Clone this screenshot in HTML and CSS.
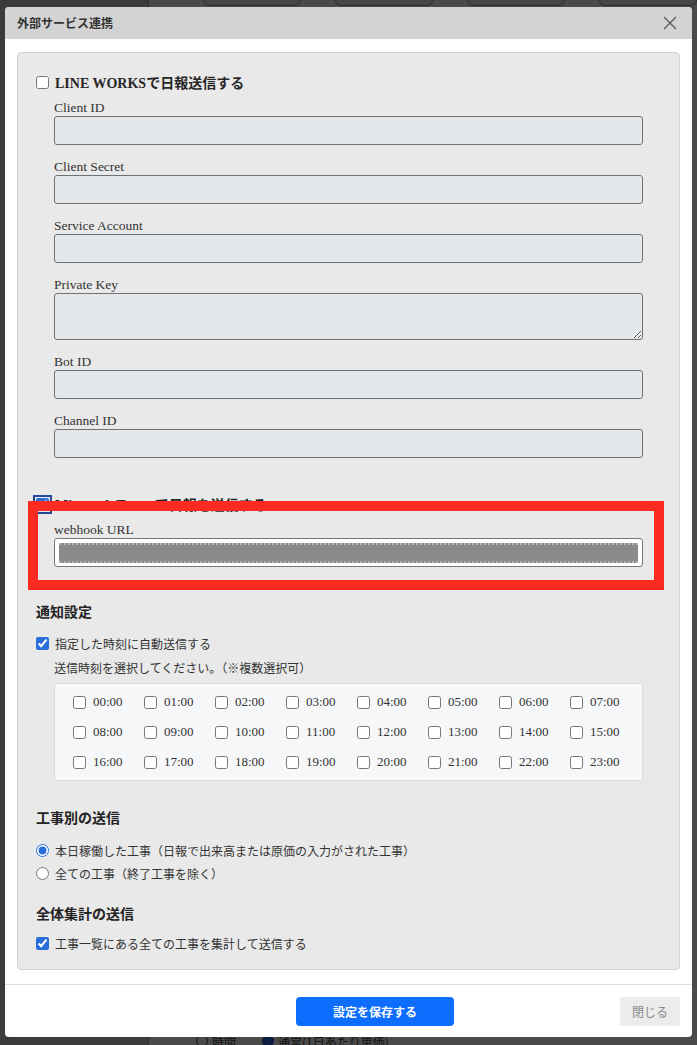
FILE: index.html
```html
<!DOCTYPE html>
<html lang="ja">
<head>
    <meta charset="UTF-8">
    <meta name="viewport" content="width=device-width, initial-scale=1.0">
    <title>外部サービス連携</title>
    <link rel="stylesheet" href="styles.css">
</head>
<body>
    <!-- ページ本体（モーダルの背後） -->
    <div class="page">
        <aside class="side"></aside>
        <main class="main">
            <div class="toolbar">
                <span class="tool"></span>
                <span class="tool"></span>
                <span class="tool"></span>
                <span class="tool"></span>
            </div>
            <div class="under-row">
                <span class="dot"></span><span>時間</span>
                <span class="dot on"></span><span>通常(1日あたり単価)</span>
            </div>
        </main>
    </div>

    <!-- 外部サービス連携モーダル -->
    <div class="modal">
        <div class="modal-head">
            <h2 class="modal-title">外部サービス連携</h2>
            <button class="close" type="button">
                <svg width="14" height="14" viewBox="0 0 14 14"><path d="M1 1L13 13M13 1L1 13" stroke="#5a5a5a" stroke-width="1.3" fill="none"/></svg>
            </button>
        </div>

        <div class="modal-body">
            <div class="panel">
                <label class="check-title"><input type="checkbox"> LINE WORKSで日報送信する</label>
                <div class="fields">
                    <div class="field">
                        <label for="client-id">Client ID</label>
                        <input class="text" type="text" id="client-id">
                    </div>
                    <div class="field">
                        <label for="client-secret">Client Secret</label>
                        <input class="text" type="text" id="client-secret">
                    </div>
                    <div class="field">
                        <label for="service-account">Service Account</label>
                        <input class="text" type="text" id="service-account">
                    </div>
                    <div class="field">
                        <label for="private-key">Private Key</label>
                        <textarea class="text area" id="private-key"></textarea>
                    </div>
                    <div class="field">
                        <label for="bot-id">Bot ID</label>
                        <input class="text" type="text" id="bot-id">
                    </div>
                    <div class="field">
                        <label for="channel-id">Channel ID</label>
                        <input class="text" type="text" id="channel-id">
                    </div>
                </div>

                <div class="teams">
                    <label class="check-title"><input type="checkbox" class="focus" checked> Microsoft Teamsで日報を送信する</label>
                    <div class="fields">
                        <div class="field">
                            <label>webhook URL</label>
                            <div class="text url"><span class="redacted"></span></div>
                        </div>
                    </div>
                    <div class="mark"></div>
                </div>

                <!-- 通知設定 -->
                <h3 class="sec-title first">通知設定</h3>
                <label class="opt check-top"><input type="checkbox" checked> 指定した時刻に自動送信する</label>
                <p class="hint">送信時刻を選択してください。（※複数選択可）</p>
                <div class="times" id="times"></div>

                <h3 class="sec-title">工事別の送信</h3>
                <label class="opt radio-first"><input type="radio" name="target" checked> 本日稼働した工事（日報で出来高または原価の入力がされた工事）</label>
                <label class="opt radio-next"><input type="radio" name="target"> 全ての工事（終了工事を除く）</label>

                <h3 class="sec-title mid">全体集計の送信</h3>
                <label class="opt check-last"><input type="checkbox" checked> 工事一覧にある全ての工事を集計して送信する</label>
            </div>
        </div>

        <div class="modal-foot">
            <button class="btn btn-save" type="button">設定を保存する</button>
            <button class="btn btn-close" type="button">閉じる</button>
        </div>
    </div>

    <script>
        // 送信時刻のチェックボックスを作る
        const times = document.getElementById('times');
        for (let h = 0; h < 24; h++) {
            const jikan = String(h).padStart(2, '0') + ':00';
            const item = document.createElement('label');
            item.className = 'time-item';
            item.innerHTML = `<input type="checkbox"> <span>${jikan}</span>`;
            times.appendChild(item);
        }
    </script>
</body>
</html>
```

FILE: styles.css
```css
body {
    margin: 0;
    width: 697px;
    height: 1045px;
    overflow: hidden;
    position: relative;
    font-family: "Liberation Serif", "Noto Sans CJK JP", serif;
    color: #333;
}
.page {
    display: flex;
    height: 1045px;
    background-color: #4a4a4a;
}
.side {
    width: 148px;
    background-color: #3b3b3b;
    border-right: 1px solid #2e2e2e;
}
.main {
    flex: 1;
    display: flex;
    flex-direction: column;
    justify-content: space-between;
}
.toolbar {
    display: flex;
    gap: 34px;
    padding-left: 54px;
}
.tool {
    width: 96px;
    height: 5px;
    border: 1px solid #2f2f2f;
    border-top: none;
    border-radius: 0 0 6px 6px;
    background-color: #464646;
}
.under-row {
    display: flex;
    align-items: center;
    gap: 4px;
    padding-left: 47px;
    margin-bottom: -3px;
    height: 14px;
    font-family: "Noto Sans CJK JP", sans-serif;
    font-size: 12px;
    color: #121212;
}
.under-row .dot {
    width: 10px;
    height: 10px;
    border: 1px solid #161616;
    border-radius: 50%;
}
.under-row .dot.on {
    margin-left: 22px;
    background-color: #0c1e44;
    border-color: #0a1530;
}

/* モーダル */
.modal {
    position: absolute;
    left: 5px;
    top: 7px;
    width: 687px;
    background-color: #fff;
    border-radius: 4px;
}
.modal-head {
    display: flex;
    align-items: center;
    justify-content: space-between;
    height: 32px;
    padding: 0 15px 0 12px;
    background-color: #d3d3d3;
    border-radius: 4px 4px 0 0;
}
.modal-title {
    margin: 0;
    font-size: 12px;
    font-weight: bold;
    color: #333;
}
.close {
    display: flex;
    padding: 0;
    border: none;
    background: none;
}
.modal-body {
    padding: 13px 12px 14px;
}
.panel {
    padding: 19px 18px 16px;
    background-color: #e9e9e9;
    border: 1px solid #d3d3d3;
    border-radius: 4px;
}
.check-title {
    display: flex;
    align-items: center;
    gap: 6px;
    height: 20px;
    font-size: 14px;
    font-weight: bold;
    color: #262626;
}
input[type="checkbox"],
input[type="radio"] {
    width: 13px;
    height: 13px;
    margin: 0;
    accent-color: #2a6edb;
}
.fields {
    margin: 7px 18px 0;
}
.field {
    margin-bottom: 13px;
}
.field:last-child {
    margin-bottom: 0;
}
.field label {
    display: block;
    height: 17px;
    line-height: 17px;
    font-size: 13.5px;
    color: #333;
}
.text {
    display: block;
    box-sizing: border-box;
    width: 100%;
    height: 29px;
    margin: 0;
    background-color: #e5e8eb;
    border: 1px solid #6e7276;
    border-radius: 3px;
}
.area {
    height: 47px;
    resize: vertical;
}
.teams {
    position: relative;
    margin-top: 36px;
}
.focus {
    outline: 2px solid #24489a;
    outline-offset: 1px;
    border-radius: 3px;
}
.url {
    display: flex;
    align-items: center;
    padding: 0 4px;
    background-color: #fff;
    border-color: #777;
}
.redacted {
    flex: 1;
    height: 16px;
    background-color: #8a8a8a;
    border-top: 2px dotted #b5b5b5;
    border-bottom: 2px dotted #b5b5b5;
    filter: blur(0.7px);
}
.mark {
    position: absolute;
    left: -8px;
    top: 7px;
    width: 636px;
    height: 89px;
    box-sizing: border-box;
    border: 10px solid #fc2b21;
}

/* 通知設定 */
.sec-title {
    margin: 28px 0 0;
    height: 20px;
    line-height: 20px;
    font-size: 14px;
    font-weight: bold;
    color: #222;
    font-family: "Liberation Serif", "Noto Sans CJK JP", serif;
}
.sec-title.first {
    margin-top: 36px;
}
.sec-title.mid {
    margin-top: 22px;
}
.opt {
    display: flex;
    align-items: center;
    gap: 6px;
    height: 20px;
    font-family: "Noto Sans CJK JP", sans-serif;
    font-size: 12px;
    color: #333;
}
.check-top {
    margin-top: 10px;
}
.radio-first {
    margin-top: 11px;
}
.radio-next {
    margin-top: 3px;
}
.check-last {
    margin-top: 8px;
}
.hint {
    margin: 5px 0 0 18px;
    height: 20px;
    line-height: 20px;
    font-family: "Noto Sans CJK JP", sans-serif;
    font-size: 12px;
    color: #333;
}
.times {
    display: grid;
    grid-template-columns: repeat(8, 71px);
    grid-auto-rows: 30px;
    margin: 5px 18px 0;
    padding: 3px 0 3px 18px;
    background-color: #f6f7f9;
    border: 1px solid #d9dbde;
}
.time-item {
    display: flex;
    align-items: center;
    gap: 7px;
    font-size: 13px;
    color: #333;
}

/* フッター */
.modal-foot {
    display: flex;
    align-items: center;
    padding: 12px 12px 11px;
    border-top: 1px solid #dedede;
}
.btn {
    height: 29px;
    border: none;
    font-family: "Noto Sans CJK JP", sans-serif;
    font-size: 12px;
    cursor: pointer;
}
.btn-save {
    width: 158px;
    margin-left: 279px;
    background-color: #0d6efd;
    color: #fff;
    font-weight: bold;
    border-radius: 4px;
}
.btn-close {
    width: 60px;
    margin-left: auto;
    background-color: #ececec;
    color: #888;
}
```
